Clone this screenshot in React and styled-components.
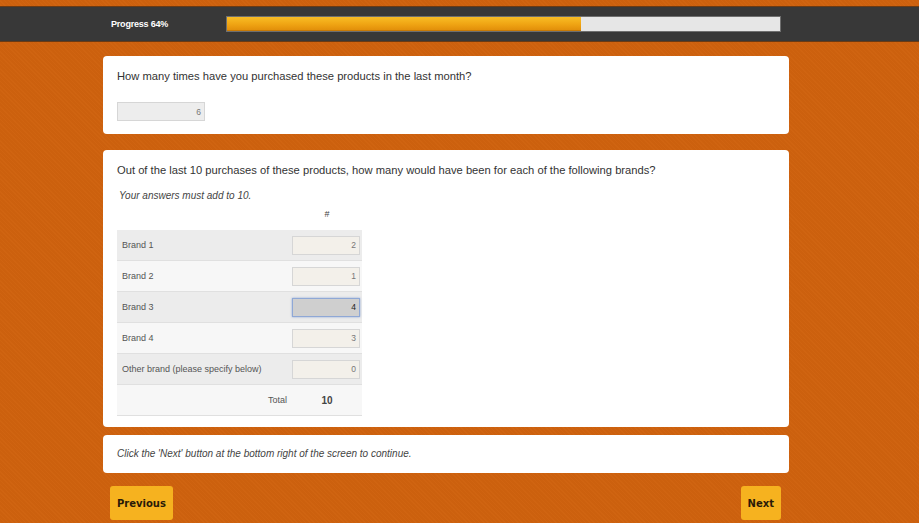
import React from 'react';
import styled, { createGlobalStyle } from 'styled-components';

const GlobalStyle = createGlobalStyle`
  html, body {
    margin: 0;
    padding: 0;
  }
  body {
    min-height: 523px;
    font-family: "Liberation Sans", Arial, sans-serif;
    background-color: #cf620e;
    background-image: repeating-linear-gradient(
      45deg,
      rgba(255, 255, 255, 0.012) 0 1px,
      rgba(0, 0, 0, 0.015) 1px 3px
    );
  }
`;

const Page = styled.div`
  padding-top: 6px;
`;

const Header = styled.header`
  height: 34px;
  background: #383838;
  border-top: 1px solid #6a3a14;
  border-bottom: 1px solid #6a3a14;
  display: flex;
  align-items: center;
`;

const ProgressLabel = styled.div`
  width: 115px;
  padding-left: 111px;
  color: #fff;
  font-size: 9px;
  font-weight: bold;
  letter-spacing: -0.2px;
`;

const ProgressTrack = styled.div`
  width: 553px;
  height: 14px;
  background: #e6e6e6;
  border: 1px solid #6f6f6f;
  display: flex;
`;

const ProgressFill = styled.div`
  height: 100%;
  background: linear-gradient(to bottom, #f8bd25 0%, #f0a514 50%, #e08c08 100%);
  box-shadow: inset 0 -1px 0 #c77a06;
`;

const Main = styled.main`
  width: 686px;
  margin-left: 103px;
  padding-top: 14px;
`;

const Card = styled.section`
  background: #fff;
  border-radius: 4px;
  padding: ${({ $pad }) => $pad || '13px 14px'};
  margin-bottom: ${({ $gap }) => $gap || '16px'};
`;

const Question = styled.p`
  margin: 0;
  font-size: 11.2px;
  line-height: 14px;
  color: #333;
`;

const Note = styled.p`
  margin: ${({ $margin }) => $margin || '0'};
  font-size: 10px;
  line-height: 12px;
  font-style: italic;
  color: #444;
`;

const NumberBox = styled.div`
  box-sizing: border-box;
  width: ${({ $w }) => $w || '68px'};
  height: 19px;
  margin-top: ${({ $top }) => $top || '0'};
  border: 1px solid ${({ $focus }) => ($focus ? '#8fa8d6' : '#d6d6d6')};
  background: ${({ $bg }) => $bg};
  color: ${({ $focus }) => ($focus ? '#222' : '#777')};
  font-size: 8.5px;
  display: flex;
  align-items: center;
  justify-content: flex-end;
  padding-right: 3px;
  box-shadow: ${({ $focus }) => ($focus ? '0 0 2px rgba(80,120,200,0.6)' : 'none')};
`;

const Grid = styled.div`
  width: 245px;
`;

const HeadRow = styled.div`
  display: grid;
  grid-template-columns: 175px 70px;
  height: 24px;
  margin-bottom: 4px;
  align-items: center;
  font-size: 9px;
  color: #444;
  span:last-child {
    text-align: center;
  }
`;

const Row = styled.div`
  display: grid;
  grid-template-columns: 175px 70px;
  align-items: center;
  height: 30px;
  border-bottom: 1px solid #e0e0e0;
  background: ${({ $alt }) => ($alt ? '#f7f7f7' : '#ececec')};
  font-size: 9px;
  color: #555;
`;

const Label = styled.div`
  padding-left: 5px;
`;

const TotalLabel = styled.div`
  text-align: right;
  padding-right: 5px;
`;

const TotalValue = styled.div`
  text-align: center;
  font-weight: bold;
  font-size: 10px;
  color: #444;
`;

const Cell = styled.div`
  display: flex;
  justify-content: flex-end;
  padding-right: 2px;
`;

const Buttons = styled.div`
  display: flex;
  justify-content: space-between;
  padding: 0 8px 0 7px;
`;

const Button = styled.button`
  height: 34px;
  padding: 0 7px;
  border: none;
  border-radius: 3px;
  background: #f6b21f;
  color: #2a1a08;
  font-family: "DejaVu Sans", Verdana, sans-serif;
  font-weight: bold;
  font-size: 10px;
  cursor: pointer;
`;

const brands = [
  { name: 'Brand 1', value: 2 },
  { name: 'Brand 2', value: 1 },
  { name: 'Brand 3', value: 4, focus: true },
  { name: 'Brand 4', value: 3 },
  { name: 'Other brand (please specify below)', value: 0 },
];

export default function App() {
  const progress = 64;
  return (
    <Page>
      <GlobalStyle />
      <Header>
        <ProgressLabel>Progress {progress}%</ProgressLabel>
        <ProgressTrack>
          <ProgressFill style={{ width: `${progress}%` }} />
        </ProgressTrack>
      </Header>

      <Main>
        <Card $pad="13px 14px 13px 14px" $gap="16px">
          <Question>How many times have you purchased these products in the last month?</Question>
          <NumberBox $w="88px" $bg="#ededed" $top="19px">6</NumberBox>
        </Card>

        <Card $pad="13px 14px 11px 14px" $gap="8px">
          <Question>Out of the last 10 purchases of these products, how many would have been for each of the following brands?</Question>
          <Note $margin="13px 0 0 2px">Your answers must add to 10.</Note>
          <Grid>
            <HeadRow>
              <span />
              <span>#</span>
            </HeadRow>
            {brands.map((b, i) => (
              <Row key={b.name} $alt={i % 2 === 1}>
                <Label>{b.name}</Label>
                <Cell>
                  <NumberBox $bg={b.focus ? '#cfcfcf' : '#f3f0ea'} $focus={b.focus}>{b.value}</NumberBox>
                </Cell>
              </Row>
            ))}
            <Row $alt>
              <TotalLabel>Total</TotalLabel>
              <TotalValue>10</TotalValue>
            </Row>
          </Grid>
        </Card>

        <Card $pad="13px 14px 13px 14px" $gap="13px">
          <Note>Click the 'Next' button at the bottom right of the screen to continue.</Note>
        </Card>

        <Buttons>
          <Button>Previous</Button>
          <Button>Next</Button>
        </Buttons>
      </Main>
    </Page>
  );
}
